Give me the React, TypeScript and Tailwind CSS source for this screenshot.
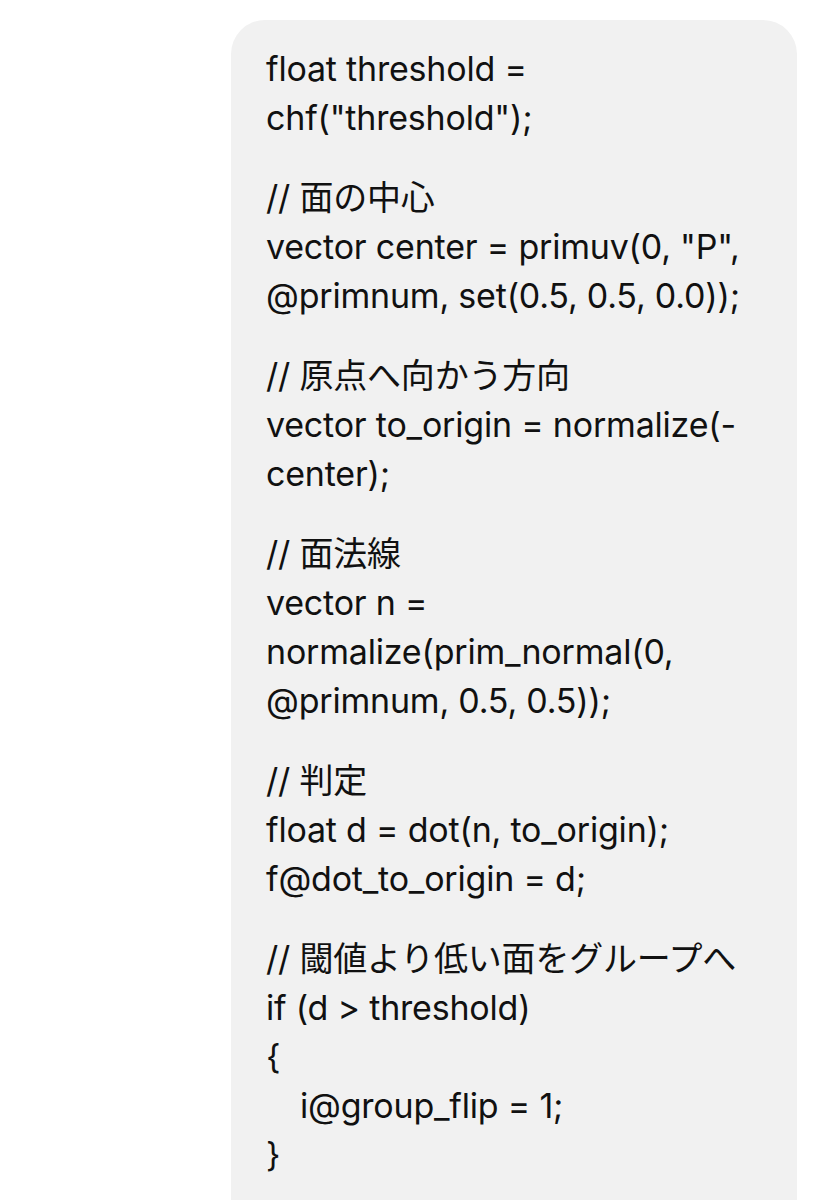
const blocks: { text: string; indent?: boolean }[][] = [
  [{ text: 'float threshold =' }, { text: 'chf("threshold");' }],
  [{ text: '// 面の中心' }, { text: 'vector center = primuv(0, "P",' }, { text: '@primnum, set(0.5, 0.5, 0.0));' }],
  [{ text: '// 原点へ向かう方向' }, { text: 'vector to_origin = normalize(-' }, { text: 'center);' }],
  [
    { text: '// 面法線' },
    { text: 'vector n =' },
    { text: 'normalize(prim_normal(0,' },
    { text: '@primnum, 0.5, 0.5));' },
  ],
  [{ text: '// 判定' }, { text: 'float d = dot(n, to_origin);' }, { text: 'f@dot_to_origin = d;' }],
  [
    { text: '// 閾値より低い面をグループへ' },
    { text: 'if (d > threshold)' },
    { text: '{' },
    { text: 'i@group_flip = 1;', indent: true },
    { text: '}' },
  ],
]

export default function App() {
  return (
    <div className="w-[834px] h-[1200px] overflow-hidden bg-white">
      <div className="ml-[231px] mt-[20px] w-[566px] h-[1240px] rounded-[34px] bg-[#f1f1f1] px-[35px] pt-[24px] text-[#111111] text-[34px] leading-[49px] tracking-[-0.2px] font-['Inter','Noto_Sans_CJK_JP',sans-serif]">
        {blocks.map((lines, i) => (
          <div key={i} className={i === 0 ? '' : 'mt-[31px]'}>
            {lines.map((line, j) => (
              <div key={j} className={'whitespace-nowrap ' + (line.indent ? 'pl-[34px]' : '')}>
                {line.text}
              </div>
            ))}
          </div>
        ))}
      </div>
    </div>
  )
}
